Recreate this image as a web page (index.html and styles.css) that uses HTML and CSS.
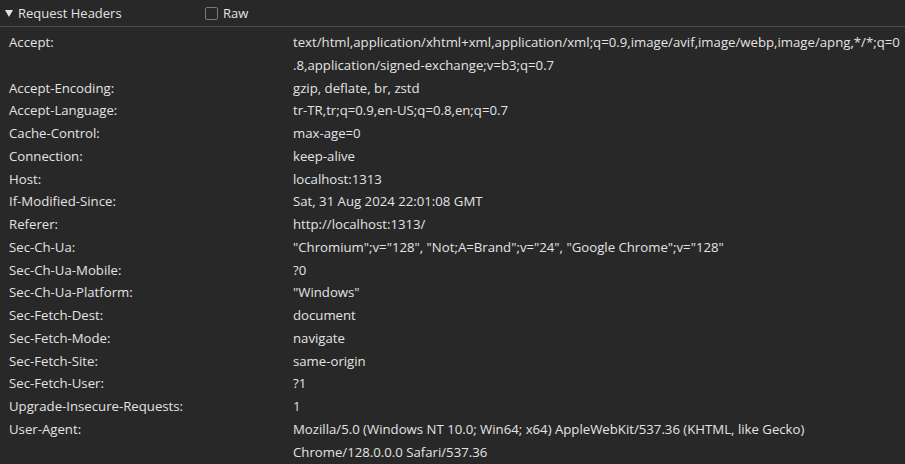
FILE: index.html
```html
<!DOCTYPE html>
<html>
<head>
<meta charset="utf-8">
<link rel="stylesheet" href="styles.css">
</head>
<body>
<div class="section">
  <div class="header">
    <div class="title"><span class="arrow"></span>Request Headers</div>
    <label class="raw"><span class="box"></span>Raw</label>
  </div>
  <div class="rows">
    <div class="row"><div class="key">Accept:</div><div class="val">text/html,application/xhtml+xml,application/xml;q=0.9,image/avif,image/webp,image/apng,*/*;q=0.8,application/signed-exchange;v=b3;q=0.7</div></div>
    <div class="row"><div class="key">Accept-Encoding:</div><div class="val">gzip, deflate, br, zstd</div></div>
    <div class="row"><div class="key">Accept-Language:</div><div class="val">tr-TR,tr;q=0.9,en-US;q=0.8,en;q=0.7</div></div>
    <div class="row"><div class="key">Cache-Control:</div><div class="val">max-age=0</div></div>
    <div class="row"><div class="key">Connection:</div><div class="val">keep-alive</div></div>
    <div class="row"><div class="key">Host:</div><div class="val">localhost:1313</div></div>
    <div class="row"><div class="key">If-Modified-Since:</div><div class="val">Sat, 31 Aug 2024 22:01:08 GMT</div></div>
    <div class="row"><div class="key">Referer:</div><div class="val">http://localhost:1313/</div></div>
    <div class="row"><div class="key">Sec-Ch-Ua:</div><div class="val">"Chromium";v="128", "Not;A=Brand";v="24", "Google Chrome";v="128"</div></div>
    <div class="row"><div class="key">Sec-Ch-Ua-Mobile:</div><div class="val">?0</div></div>
    <div class="row"><div class="key">Sec-Ch-Ua-Platform:</div><div class="val">"Windows"</div></div>
    <div class="row"><div class="key">Sec-Fetch-Dest:</div><div class="val">document</div></div>
    <div class="row"><div class="key">Sec-Fetch-Mode:</div><div class="val">navigate</div></div>
    <div class="row"><div class="key">Sec-Fetch-Site:</div><div class="val">same-origin</div></div>
    <div class="row"><div class="key">Sec-Fetch-User:</div><div class="val">?1</div></div>
    <div class="row"><div class="key">Upgrade-Insecure-Requests:</div><div class="val">1</div></div>
    <div class="row"><div class="key">User-Agent:</div><div class="val">Mozilla/5.0 (Windows NT 10.0; Win64; x64) AppleWebKit/537.36 (KHTML, like Gecko) Chrome/128.0.0.0 Safari/537.36</div></div>
  </div>
</div>
</body>
</html>
```
FILE: styles.css
```css
html, body {
  margin: 0;
  padding: 0;
  background: #282828;
  height: 100%;
  overflow: hidden;
}
body {
  font-family: "Open Sans", "Noto Sans", sans-serif;
  font-size: 13.2px;
  color: #e3e3e3;
}
.header {
  display: flex;
  align-items: center;
  height: 27px;
  border-bottom: 1px solid #4b4b4b;
  box-sizing: border-box;
  font-size: 13px;
}
.title {
  display: flex;
  align-items: center;
  width: 205px;
  padding-left: 5px;
  box-sizing: border-box;
}
.arrow {
  width: 0;
  height: 0;
  border-left: 4px solid transparent;
  border-right: 4px solid transparent;
  border-top: 7px solid #e3e3e3;
  margin-right: 5px;
}
.raw {
  display: flex;
  align-items: center;
}
.box {
  width: 11px;
  height: 11px;
  border: 1px solid #7a7a7a;
  border-radius: 2px;
  margin-right: 5px;
}
.rows {
  padding-top: 4px;
}
.row {
  display: flex;
  line-height: 22.75px;
}
.key {
  width: 293px;
  flex: none;
  padding-left: 9px;
  box-sizing: border-box;
}
.val {
  flex: 1;
  min-width: 0;
  overflow-wrap: anywhere;
  padding-right: 2px;
}
```
